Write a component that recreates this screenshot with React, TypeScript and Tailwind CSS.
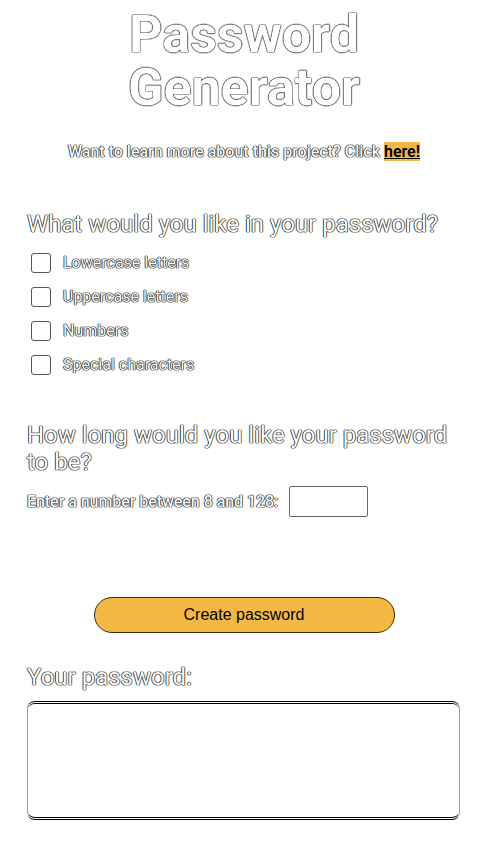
import React from "react";

const outline = "[text-shadow:0_0_1px_#000,0_0_1px_#000,0_0_1px_#000,0_0_1px_#000]";

const options = ["Lowercase letters", "Uppercase letters", "Numbers", "Special characters"];

export default function App() {
  return (
    <div className="min-h-screen bg-white font-['Roboto',sans-serif] text-white">
      <div className="px-[27px] pt-[8px] pb-10">
        {/* Header */}
        <h1 className={`text-center text-[52px] font-bold leading-[53px] ${outline}`}>
          Password
          <br />
          Generator
        </h1>
        <p className={`mt-[26px] text-center text-[16px] leading-[24px] font-medium ${outline}`}>
          Want to learn more about this project? Click{" "}
          <a href="#" className="bg-[#f4b942] font-semibold text-black underline [text-shadow:none]">
            here!
          </a>
        </p>

        {/* Character options */}
        <h2 className={`mt-[47px] text-[24px] leading-[27px] ${outline}`}>
          What would you like in your password?
        </h2>
        <div className="mt-[13px] flex flex-col gap-[10px] pl-[4px]">
          {options.map((o) => (
            <label key={o} className="flex h-[24px] items-center gap-[12px]">
              <span className="h-[20px] w-[20px] rounded-[3px] border border-[#555] bg-white" />
              <span className={`text-[16px] leading-[24px] ${outline}`}>{o}</span>
            </label>
          ))}
        </div>

        {/* Length */}
        <h2 className={`mt-[45px] text-[24px] leading-[27px] ${outline}`}>
          How long would you like your password to be?
        </h2>
        <div className="mt-[10px] flex items-center gap-[11px]">
          <span className={`text-[16px] font-medium tracking-[-0.05px] ${outline}`}>Enter a number between 8 and 128:</span>
          <input
            type="text"
            className="h-[31px] w-[79px] rounded-[2px] border border-[#666] bg-white text-black"
          />
        </div>

        {/* Button */}
        <div className="mt-[80px] flex justify-center">
          <button className="h-[36px] w-[301px] rounded-full border border-[#3a2a10] bg-[#f4b942] font-['Liberation_Sans',Arial,sans-serif] text-[16px] text-black">
            Create password
          </button>
        </div>

        {/* Result */}
        <h2 className={`mt-[31px] text-[24px] leading-[27px] ${outline}`}>Your password:</h2>
        <textarea
          readOnly
          className="mt-[10px] block h-[119px] w-[433px] resize-none rounded-[8px] border-x border-y-[3px] border-double border-x-[#999] border-y-black bg-white"
        />
      </div>
    </div>
  );
}
